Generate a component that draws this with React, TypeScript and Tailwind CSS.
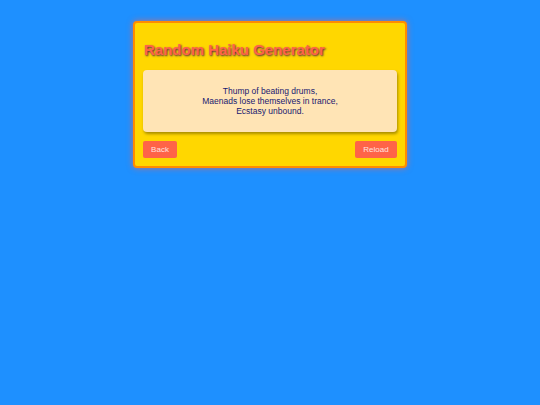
import React from "react";

const lines = ["Thump of beating drums,", "Maenads lose themselves in trance,", "Ecstasy unbound."];

const App: React.FC = () => {
  return (
    <div className="min-h-screen w-full bg-[#1e90ff] pt-[21px]" style={{ fontFamily: '"Liberation Sans", Arial, sans-serif' }}>
      <div className="mx-auto w-[274px] rounded-[4px] border-2 border-[#ff8c00] bg-[#ffd700] p-2 shadow-[0_0_6px_rgba(255,99,71,0.7)]">
        <h1 className="mt-[10px] mb-[11px] pl-[1px] text-[15px] leading-[18px] font-bold text-[#ff6347] [text-shadow:1px_1px_2px_#4a2040]">
          Random Haiku Generator
        </h1>
        <div className="rounded-[4px] bg-[#ffe4b5] px-3 py-[16px] text-center text-[8.5px] leading-[10px] text-[#191970] shadow-[1px_2px_3px_rgba(0,0,0,0.35)]">
          {lines.map((l) => (
            <p key={l}>{l}</p>
          ))}
        </div>
        <div className="mt-[9px] flex justify-between">
          <button className="h-[17px] w-[34px] rounded-[2px] bg-[#ff6347] text-[8px] text-[#ffe4e1]">Back</button>
          <button className="h-[17px] w-[42px] rounded-[2px] bg-[#ff6347] text-[8px] text-[#ffe4e1]">Reload</button>
        </div>
      </div>
    </div>
  );
};

export default App;
